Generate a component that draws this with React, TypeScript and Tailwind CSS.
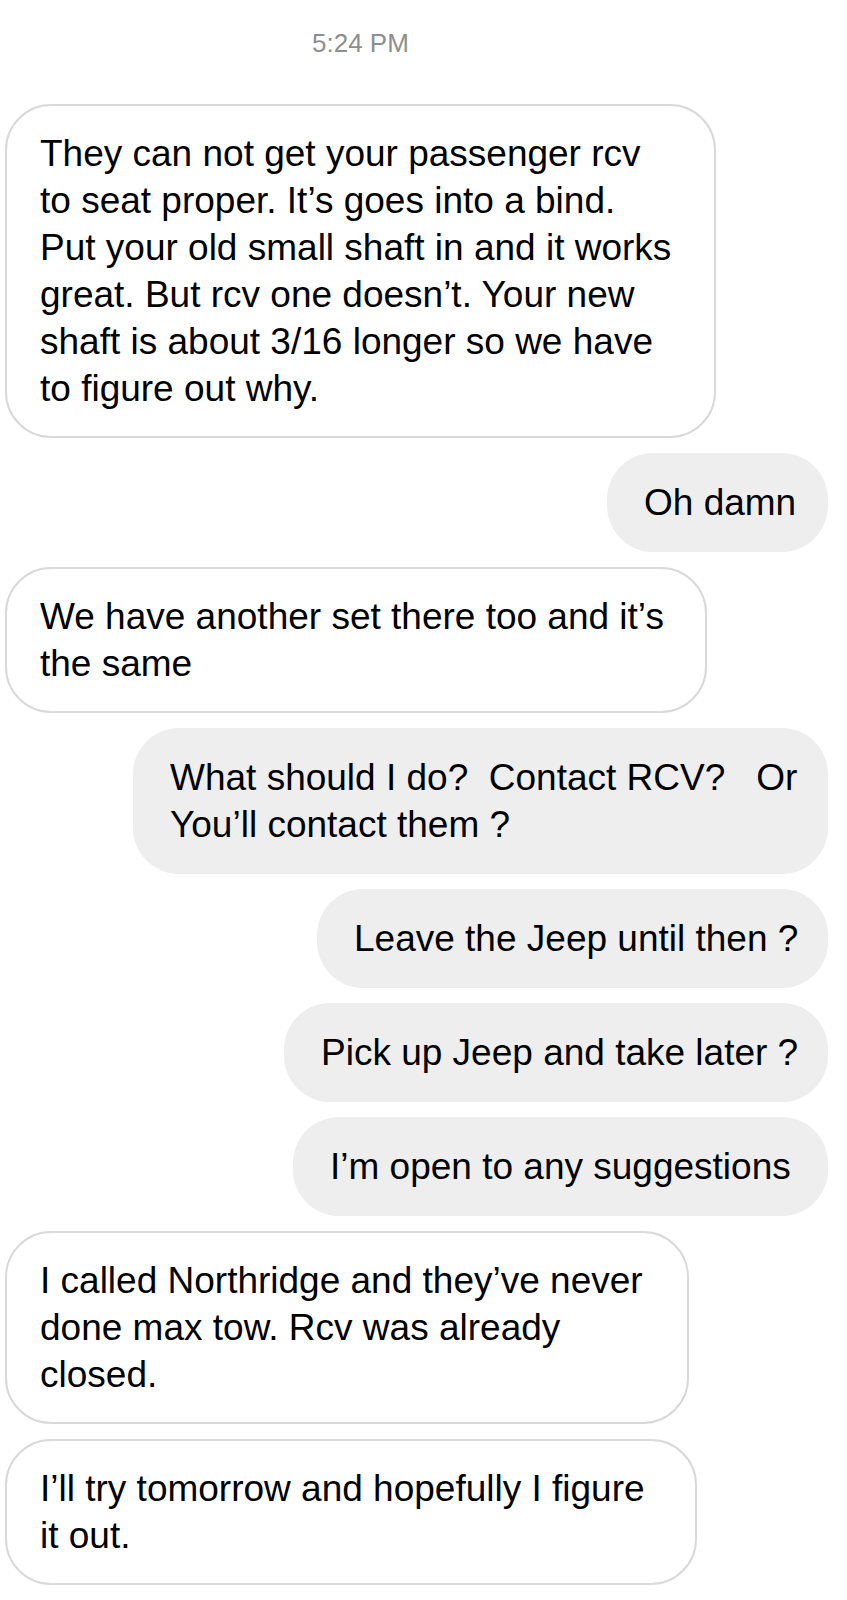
import React from "react";

type Msg = {
  from: "them" | "me";
  lines: string[];
  w: string;
};

const messages: Msg[] = [
  {
    from: "them",
    w: "w-[711px]",
    lines: [
      "They can not get your passenger rcv",
      "to seat proper. It’s goes into a bind.",
      "Put your old small shaft in and it works",
      "great. But rcv one doesn’t. Your new",
      "shaft is about 3/16 longer so we have",
      "to figure out why.",
    ],
  },
  { from: "me", w: "w-[221px]", lines: ["Oh damn"] },
  {
    from: "them",
    w: "w-[702px]",
    lines: ["We have another set there too and it’s", "the same"],
  },
  {
    from: "me",
    w: "w-[695px]",
    lines: ["What should I do?  Contact RCV?   Or", "You’ll contact them ?"],
  },
  { from: "me", w: "w-[511px]", lines: ["Leave the Jeep until then ?"] },
  { from: "me", w: "w-[544px]", lines: ["Pick up Jeep and take later ?"] },
  { from: "me", w: "w-[535px]", lines: ["I’m open to any suggestions"] },
  {
    from: "them",
    w: "w-[684px]",
    lines: [
      "I called Northridge and they’ve never",
      "done max tow. Rcv was already",
      "closed.",
    ],
  },
  {
    from: "them",
    w: "w-[692px]",
    lines: ["I’ll try tomorrow and hopefully I figure", "it out."],
  },
];

function Bubble({ msg }: { msg: Msg }) {
  // incoming = white with grey outline, outgoing = flat grey
  const side =
    msg.from === "them"
      ? "self-start ml-[5px] bg-white border-2 border-[#d9d9d9] py-[24px] pl-[33px]"
      : "self-end mr-[19px] bg-[#eeeeee] py-[26px] pl-[37px]";

  return (
    <div className={`${side} ${msg.w} rounded-[46px]`}>
      {msg.lines.map((line, i) => (
        <div key={i} className="whitespace-pre text-[37px] leading-[47px] text-black">
          {line}
        </div>
      ))}
    </div>
  );
}

export default function App() {
  return (
    <div
      className="min-h-[1600px] w-[847px] bg-white pt-[28px]"
      style={{ fontFamily: '"Liberation Sans", Arial, sans-serif' }}
    >
      {/* timestamp */}
      <div className="ml-[312px] text-[26px] leading-[30px] text-[#8e8e8e]">5:24 PM</div>

      {/* thread */}
      <div className="mt-[46px] flex flex-col gap-[15px]">
        {messages.map((m, i) => (
          <Bubble key={i} msg={m} />
        ))}
      </div>
    </div>
  );
}
